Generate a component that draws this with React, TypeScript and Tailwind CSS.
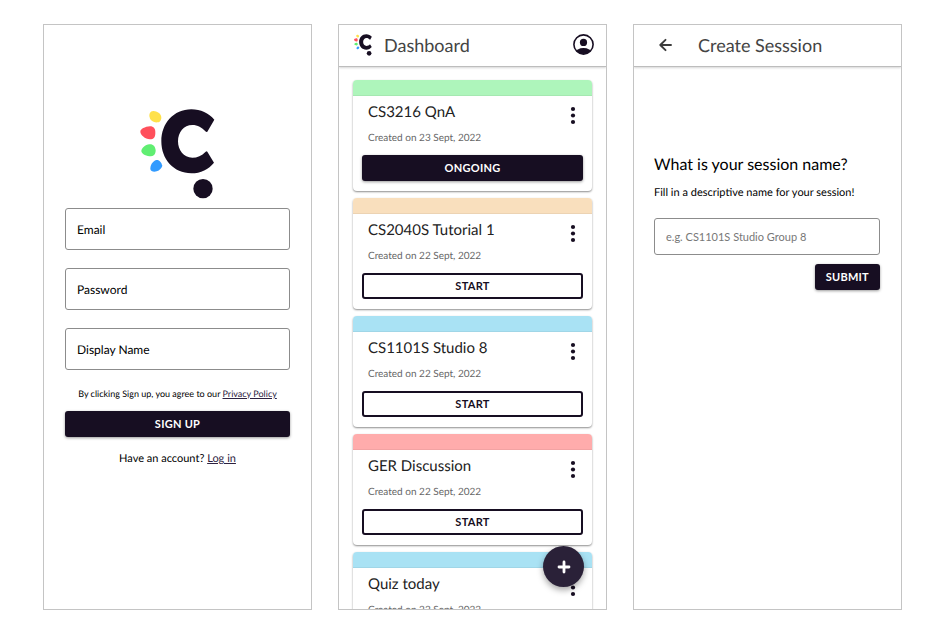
import type { ReactNode } from "react";

const ink = "#170e22";

function Logo({ className }: { className: string }) {
  return (
    <svg viewBox="62 41 225 270" className={className} role="img" aria-label="Logo">
      <path
        fill={ink}
        d="M285 73C268 53 244 42 216 42C163 42 126 84 126 138C126 192 163 234 216 234C244 234 268 222 284 202L264 169Q262 166 259 169C247 181 234 187 219 187C193 187 176 165 176 138C176 111 193 89 219 89C235 89 248 97 258 108Q262 112 264 109Z"
      />
      <circle cx="251" cy="280" r="29" fill={ink} />
      <path fill="#ffe14a" d="M103 47C93 46 88 57 91 66C93 77 105 83 115 81C124 80 128 70 125 61C122 53 113 48 103 47Z" />
      <path fill="#ff505c" d="M92 93C77 94 63 101 63 109C63 118 77 131 92 132C103 132 108 126 108 113C109 100 103 93 92 93Z" />
      <path fill="#60ee72" d="M90 147C78 148 66 159 66 168C67 177 83 183 95 183C105 182 109 175 109 165C108 154 102 146 90 147Z" />
      <path fill="#329bff" d="M111 194C99 198 93 209 93 221C94 228 103 231 112 228C121 225 127 218 129 211C126 201 119 192 111 194Z" />
    </svg>
  );
}

function Screen({ children }: { children: ReactNode }) {
  return (
    <section className="relative flex min-w-0 flex-col overflow-hidden border border-[#c4c4c4] bg-white">
      {children}
    </section>
  );
}

function TopBar({ children }: { children: ReactNode }) {
  return (
    <header className="flex h-[42px] shrink-0 items-center border-b border-[#bdbdbd] pb-[2px] shadow-[0_1px_2px_rgba(0,0,0,0.16)]">
      {children}
    </header>
  );
}

const filled =
  "h-[26px] rounded-[3px] bg-[#170e22] text-[11px] font-bold tracking-wide text-white shadow-[0_1px_3px_rgba(0,0,0,0.4)]";

function Field({ id, label, type }: { id: string; label: string; type: string }) {
  return (
    <div className="relative">
      <input
        id={id}
        type={type}
        className="block h-[42px] w-full rounded-[3px] border border-[#8c8c8c] px-3 text-xs"
      />
      <label htmlFor={id} className="absolute inset-y-0 left-3 flex items-center pt-[2px] text-xs">
        {label}
      </label>
    </div>
  );
}

function SignUp() {
  return (
    <Screen>
      <form className="flex flex-col px-[21px] pt-[84px]">
        <Logo className="h-[90px] w-[75px] self-center" />
        <div className="mt-[9px] flex flex-col gap-[18px]">
          <Field id="email" label="Email" type="email" />
          <Field id="password" label="Password" type="password" />
          <Field id="display-name" label="Display Name" type="text" />
        </div>
        <p className="mt-[17px] text-center text-[9px] leading-[14px]">
          By clicking Sign up, you agree to our{" "}
          <a href="#privacy" className="text-[#2c2140] underline">Privacy Policy</a>
        </p>
        <button type="button" className={`mt-[10px] ${filled}`}>SIGN UP</button>
        <p className="mt-[14px] text-center text-[11px] leading-4">
          Have an account?{" "}
          <a href="#login" className="text-[#2c2140] underline">Log in</a>
        </p>
      </form>
    </Screen>
  );
}

type Session = { name: string; date: string; bar: string; ongoing?: boolean };

const sessions: Session[] = [
  { name: "CS3216 QnA", date: "23 Sept, 2022", bar: "bg-[#aef5bb]", ongoing: true },
  { name: "CS2040S Tutorial 1", date: "22 Sept, 2022", bar: "bg-[#f9dfbd]" },
  { name: "CS1101S Studio 8", date: "22 Sept, 2022", bar: "bg-[#a9e2f4]" },
  { name: "GER Discussion", date: "22 Sept, 2022", bar: "bg-[#ffacac]" },
  { name: "Quiz today", date: "22 Sept, 2022", bar: "bg-[#a9e2f4]" },
];

function SessionCard({ session }: { session: Session }) {
  return (
    <li className="shrink-0 overflow-hidden rounded-[4px] bg-white shadow-[0_1px_2px_rgba(0,0,0,0.45)]">
      <div className={`box-content h-[15px] border-b border-black/5 ${session.bar}`} />
      <div className="flex items-start justify-between pl-[15px] pr-3">
        <div>
          <h2 className="mt-[6px] text-[15px] leading-5 text-[#222]">{session.name}</h2>
          <p className="mt-2 text-[10px] leading-4 text-[#666]">Created on {session.date}</p>
        </div>
        <button type="button" aria-label={`Options for ${session.name}`} className="mt-[10px] px-1">
          <svg viewBox="0 0 6 20" className="h-5 w-[6px]" fill={ink}>
            <circle cx="3" cy="3" r="2.1" />
            <circle cx="3" cy="9.5" r="2.1" />
            <circle cx="3" cy="16" r="2.1" />
          </svg>
        </button>
      </div>
      <div className="px-[9px] pb-[10px] pt-[9px]">
        {session.ongoing ? (
          <button type="button" className={`block w-full ${filled}`}>ONGOING</button>
        ) : (
          <button
            type="button"
            className="block h-[26px] w-full rounded-[3px] border-2 border-[#170e22] text-[11px] font-bold tracking-wide text-[#170e22]"
          >
            START
          </button>
        )}
      </div>
    </li>
  );
}

function Dashboard() {
  return (
    <Screen>
      <TopBar>
        <Logo className="ml-[15px] h-[22px] w-[18px]" />
        <h1 className="ml-3 text-lg leading-6 text-[#444]">Dashboard</h1>
        <button type="button" aria-label="Account" className="ml-auto mr-3">
          <svg viewBox="0 0 21 21" className="size-[21px]">
            <clipPath id="face">
              <circle cx="10.5" cy="10.5" r="9.6" />
            </clipPath>
            <ellipse cx="10.5" cy="18.8" rx="8" ry="4.8" fill={ink} clipPath="url(#face)" />
            <circle cx="10.5" cy="10.5" r="9.6" fill="none" stroke={ink} strokeWidth="1.6" />
            <circle cx="10.5" cy="8.4" r="3.6" fill={ink} />
          </svg>
        </button>
      </TopBar>
      <ul className="flex min-h-0 flex-1 flex-col gap-[7px] overflow-hidden px-[14px] pt-[13px]">
        {sessions.map((session) => (
          <SessionCard key={session.name} session={session} />
        ))}
      </ul>
      <button
        type="button"
        aria-label="New session"
        className="absolute bottom-[22px] right-[22px] flex size-[41px] items-center justify-center rounded-full bg-[#2a2138] shadow-[0_3px_6px_rgba(0,0,0,0.35)]"
      >
        <svg viewBox="0 0 14 14" className="size-[14px]" stroke="white" strokeWidth="2.8" strokeLinecap="round">
          <path d="M7 2v10M2 7h10" />
        </svg>
      </button>
    </Screen>
  );
}

function CreateSession() {
  return (
    <Screen>
      <TopBar>
        <button type="button" aria-label="Back" className="ml-[25px]">
          <svg
            viewBox="0 0 14 14"
            className="size-[14px]"
            fill="none"
            stroke="#3c3c3c"
            strokeWidth="1.9"
            strokeLinecap="round"
            strokeLinejoin="round"
          >
            <path d="M12 7H1.5M6.5 1.8L1.3 7l5.2 5.2" />
          </svg>
        </button>
        <h1 className="ml-[25px] text-lg leading-6 text-[#444]">Create Sesssion</h1>
      </TopBar>
      <form className="flex flex-col pl-5 pr-[21px] pt-[88px]">
        <label htmlFor="session-name" className="text-base leading-5">What is your session name?</label>
        <p className="mt-[10px] text-[11px] leading-4">Fill in a descriptive name for your session!</p>
        <input
          id="session-name"
          type="text"
          placeholder="e.g. CS1101S Studio Group 8"
          className="mt-[17px] h-[37px] w-full rounded-[3px] border border-[#8c8c8c] px-[11px] text-[11px] placeholder:text-[#777]"
        />
        <button type="button" className={`mt-[9px] self-end px-[11px] ${filled}`}>SUBMIT</button>
      </form>
    </Screen>
  );
}

export default function App() {
  return (
    <main className="grid h-screen min-h-[635px] grid-cols-3 gap-[26px] bg-white pb-[25px] pl-[43px] pr-11 pt-6 font-[Lato,sans-serif] text-black [text-rendering:geometricPrecision]">
      <SignUp />
      <Dashboard />
      <CreateSession />
    </main>
  );
}
